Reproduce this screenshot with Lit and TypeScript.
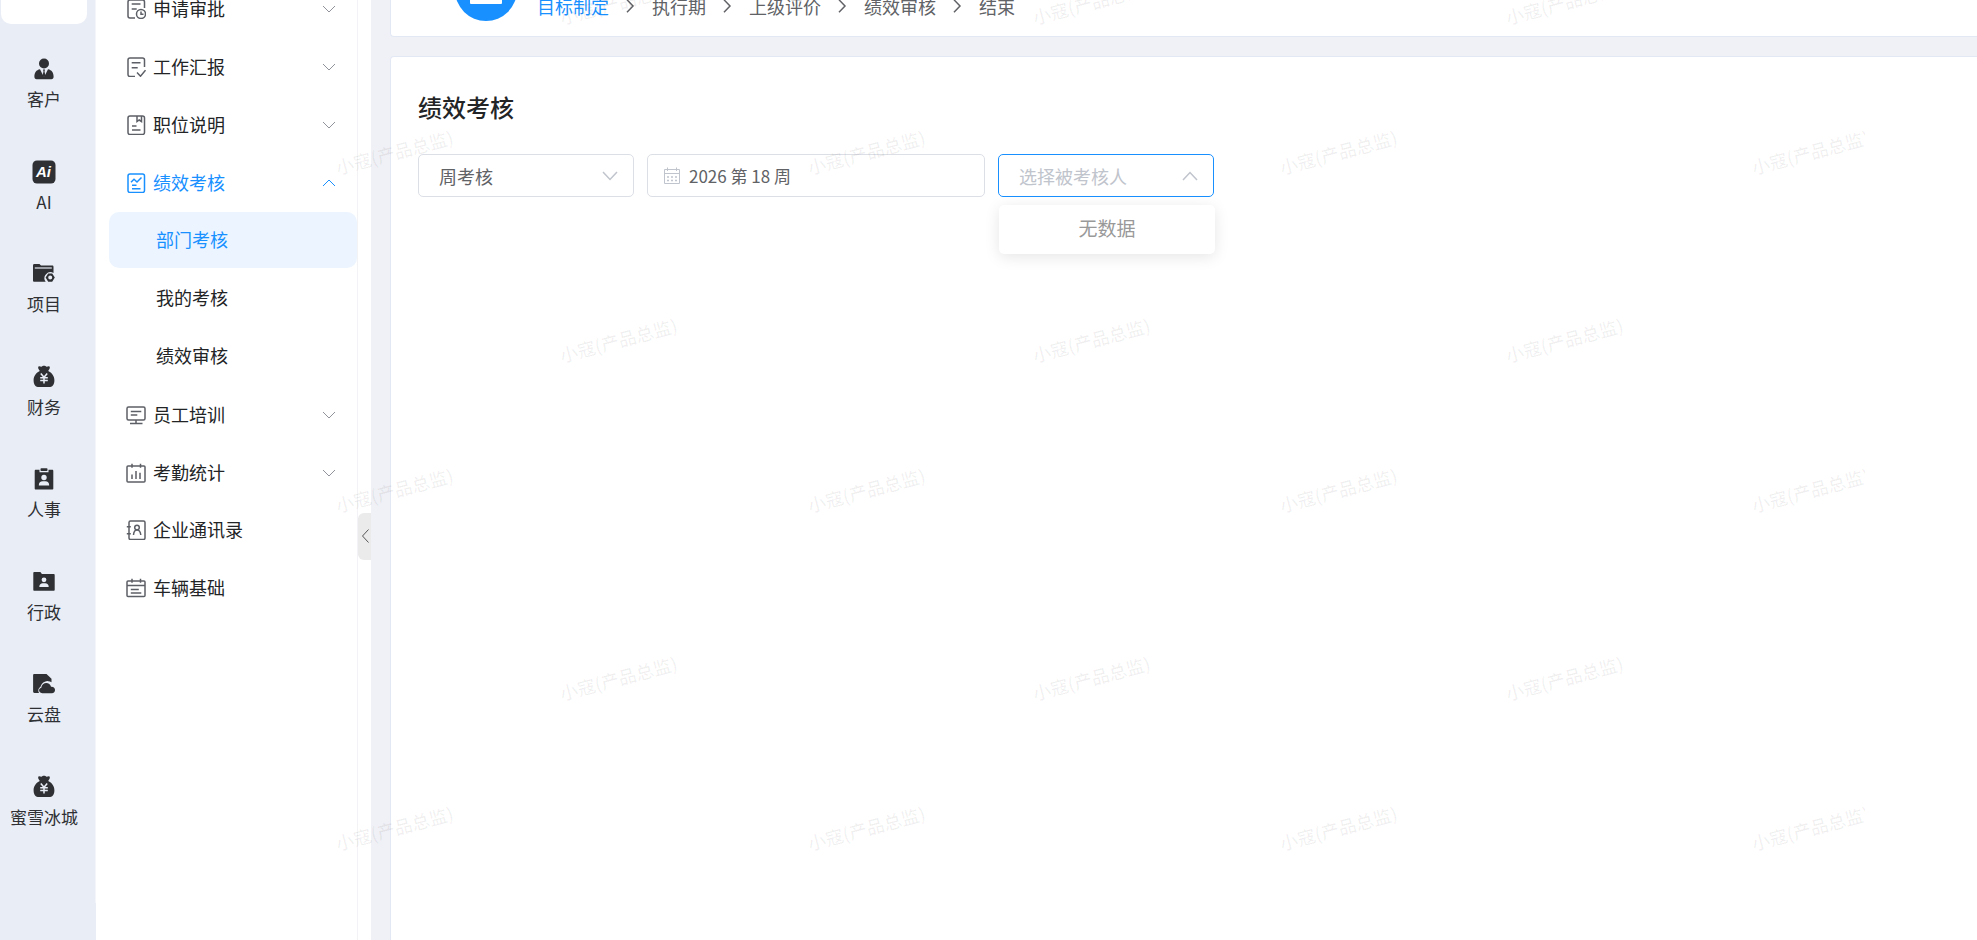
import { LitElement, html, svg, css, SVGTemplateResult } from "lit";
import { customElement, property, state } from "lit/decorators.js";
import { classMap } from "lit/directives/class-map.js";

const YEN_BAG = svg`
  <path fill="currentColor" d="M6.5 1.6c1-.9 1.900.3 2.800.2C10 1.200 11 .7 12 .7s2 .5 2.700 1.100c.9.1 1.800-1.100 2.800-.2 1 1-.3 3.200-1.300 4.400 3.600 1.800 6.200 5 6.200 9.200 0 4.800-2.200 6.800-5.400 6.800H7c-3.200 0-5.400-2-5.400-6.800 0-4.200 2.600-7.400 6.200-9.200C6.800 4.800 5.500 2.600 6.500 1.600z"/>
  <path fill="none" stroke="#e9edf6" stroke-width="1.500" d="M8.800 8.500l3.200 3.800 3.200-3.800M8.200 12.800h7.600M8.200 15.600h7.600M12 12v6.500"/>`;

const railIcons: Record<string, SVGTemplateResult> = {
  customer: svg`
    <circle cx="12" cy="6.500" r="5" fill="currentColor"/>
    <path fill="currentColor" d="M8 12.200l4 8 4-8c3.800.7 5.600 3.300 5.600 7.600 0 1.700-.8 2.400-2.200 2.400H4.600c-1.400 0-2.200-.7-2.200-2.400 0-4.300 1.800-6.900 5.600-7.600z"/>
    <path fill="currentColor" d="M11 12.500h2l-.5 2 .9 4-1.400 2.500-1.400-2.500.9-4z"/>`,
  ai: svg`
    <rect x=".5" y=".5" width="23" height="23" rx="4.500" fill="currentColor"/>
    <text class="glyph" x="11.500" y="17" text-anchor="middle">Ai</text>`,
  project: svg`
    <path fill="currentColor" d="M1 3.500c0-.9.500-1.500 1.300-1.500h5.200l1.500 1.600h11.200c.8 0 1.300.5 1.300 1.300V11a6 6 0 0 0-7.800 8.800H2.300c-.8 0-1.300-.5-1.300-1.300z"/>
    <path stroke="#a9acb3" stroke-width="1.800" d="M2.800 6h17"/>
    <path fill="currentColor" fill-rule="evenodd" d="M16.200 11.500h4l2.600 4-2.600 4.300h-4l-2.600-4.300zM18.200 13.600a2 2 0 1 0 0 4 2 2 0 0 0 0-4z"/>`,
  bag: YEN_BAG,
  staff: svg`
    <path fill="currentColor" d="M3.800 2.800h3.700v2.400h9V2.800h3.700c.7 0 1.100.4 1.100 1.100v17.500c0 .7-.4 1.100-1.100 1.100H3.800c-.7 0-1.100-.4-1.100-1.100V3.900c0-.7.400-1.100 1.100-1.100z"/>
    <rect x="8.500" y="1.300" width="7" height="2.700" rx=".8" fill="currentColor"/>
    <circle cx="12" cy="10.500" r="2.700" fill="#e9edf6"/>
    <path fill="#e9edf6" d="M6.800 18.500c0-3 1.600-4.300 3.800-4.300h2.800c2.200 0 3.800 1.300 3.800 4.300z"/>`,
  admin: svg`
    <path fill="currentColor" d="M1.300 3.200c0-.7.400-1.100 1.100-1.100h6l1.500 2h11.700c.7 0 1.100.4 1.100 1.100v14.500c0 .7-.4 1.100-1.100 1.100H2.400c-.7 0-1.100-.4-1.100-1.100z"/>
    <circle cx="12" cy="9.800" r="2.400" fill="#e9edf6"/>
    <path fill="#e9edf6" d="M7.300 17c0-2.700 1.500-3.800 3.400-3.800h2.600c1.900 0 3.400 1.100 3.400 3.800z"/>`,
  drive: svg`
    <path fill="currentColor" d="M2.500 2h12l5 4.800v3.500a7.200 7.200 0 0 0-11 4.500c-2.300 1.200-2.800 4-1.500 6.200H2.500c-.9 0-1.400-.5-1.400-1.400V3.400C1.100 2.500 1.600 2 2.500 2z"/>
    <path fill="currentColor" d="M10.300 21.200c-3.800 0-4.400-4.600-1-5.500.4-6.200 8.900-6.300 9.700-1 5.200-.4 5.200 6.500.8 6.500z"/>`,
};

const navIcons: Record<string, SVGTemplateResult> = {
  apply: svg`<path d="M9 19H4a2 2 0 0 1-2-2V3a2 2 0 0 1 2-2h12.500a2 2 0 0 1 2 2v6M5.700 5h8.800M5.700 10h5"/><circle cx="15" cy="15" r="4.500"/><path d="M15 12.500V15.300h2.500"/>`,
  report: svg`<path d="M9 19.500H4a2 2 0 0 1-2-2V3a2 2 0 0 1 2-2h12.500a2 2 0 0 1 2 2v7M5.700 5.700h8.800M5.700 10.700h6M11 15.500l3.500 3.700 5-6"/>`,
  post: svg`<rect x="2" y="1" width="16.500" height="18.500" rx="2"/><path d="M11 1v5.500l2.200-1.500 2.300 1.500V1M6 11h4.500M6 15h8.500"/>`,
  review: svg`<rect x="2" y="1" width="16.500" height="18.500" rx="2"/><path d="M5 9.200l3-3 3 2.800 4.500-4.500M6 12.300h4.500M6 15.800h8.500"/>`,
  training: svg`<rect x="1" y="2" width="18" height="13" rx="1.500"/><path d="M4.800 6.500h10.500M4.800 10h6.500M10 15v3M4 18.500h12.500"/>`,
  stats: svg`<rect x="1" y="3" width="18" height="16" rx="1"/><path d="M6 .8v4M14.500.8v4M6 11.500v4.500M10 8v8M14 9.800v6.200"/>`,
  contacts: svg`<rect x="3" y="1" width="16" height="18.500" rx="1.500"/><path d="M.8 6.800h4M.8 13.800h4"/><circle cx="11" cy="7.500" r="2.300"/><path d="M7.500 15c.2-3 1.500-5 3.500-5 2 0 3.500 2 3.800 5"/>`,
  vehicle: svg`<rect x="1" y="3" width="18" height="15.500" rx="1"/><path d="M1 7.500h18M6 .8v4M14.500.8v4M4.800 11.500h8M4.800 15h10.500"/>`,
};

interface RailItem { label: string; icon: string }
interface NavItem {
  label: string;
  icon: string;
  expandable?: boolean;
  children?: string[];
}

const RAIL: RailItem[] = [
  { label: "客户", icon: "customer" },
  { label: "AI", icon: "ai" },
  { label: "项目", icon: "project" },
  { label: "财务", icon: "bag" },
  { label: "人事", icon: "staff" },
  { label: "行政", icon: "admin" },
  { label: "云盘", icon: "drive" },
  { label: "蜜雪冰城", icon: "bag" },
];

const NAV: NavItem[] = [
  { label: "申请审批", icon: "apply", expandable: true },
  { label: "工作汇报", icon: "report", expandable: true },
  { label: "职位说明", icon: "post", expandable: true },
  { label: "绩效考核", icon: "review", expandable: true, children: ["部门考核", "我的考核", "绩效审核"] },
  { label: "员工培训", icon: "training", expandable: true },
  { label: "考勤统计", icon: "stats", expandable: true },
  { label: "企业通讯录", icon: "contacts" },
  { label: "车辆基础", icon: "vehicle" },
];

const STEPS = ["目标制定", "执行期", "上级评价", "绩效审核", "结束"];

const reset = css`
  * { box-sizing: border-box; }
  ul, ol { list-style: none; margin: 0; padding: 0; }
  a { color: inherit; text-decoration: none; }
  button { border: 0; padding: 0; background: none; font: inherit; color: inherit; cursor: pointer; }
  svg { display: block; flex: none; }
`;

@customElement("app-rail")
export class AppRail extends LitElement {
  static styles = [reset, css`
    :host { display: block; width: 96px; flex: none; background: #e9edf6; overflow: hidden; }
    .inner { height: calc(100% - 37px); border-right: 1px solid #f3f5fa; padding: 0 8px 0 1px; }
    .current { display: block; height: 24px; background: #fff; border-radius: 0 0 10px 10px; }
    .list { display: grid; grid-template-rows: repeat(8, 1fr); height: 820px; margin-top: 9px; }
    .item { display: flex; flex-direction: column; align-items: center; justify-content: center; gap: 6px; height: 100%; color: #2e3033; font-size: 17px; line-height: 24px; white-space: nowrap; }
    .glyph { fill: #fff; font: italic 700 15px "Liberation Sans", sans-serif; }
  `];

  render() {
    return html`
      <nav class="inner" aria-label="应用">
        <span class="current"></span>
        <ul class="list">
          ${RAIL.map((r) => html`<li>
            <a class="item" href="#">
              <svg width="24" height="24" viewBox="0 0 24 24" aria-hidden="true">${railIcons[r.icon]}</svg>
              <span>${r.label}</span>
            </a>
          </li>`)}
        </ul>
      </nav>`;
  }
}

@customElement("app-sidebar")
export class AppSidebar extends LitElement {
  @state() private open = "绩效考核";
  @property() current = "部门考核";

  static styles = [reset, css`
    :host { display: flex; width: 275px; flex: none; background: #fff; overflow: hidden; }
    .menu { flex: 1; border-right: 1px solid #f3f3f5; padding-left: 13px; }
    .tree { margin-top: -20px; }
    .row { display: flex; align-items: center; gap: 7px; width: 100%; height: 56px; margin-bottom: 2px; padding: 0 21px 0 17px; color: #222426; font-size: 18px; line-height: 26px; text-align: left; }
    .head { height: 58px; margin-bottom: 0; }
    .label { padding-bottom: 2px; }
    .row svg { fill: none; stroke: #5c5f66; stroke-width: 1.5; }
    .row .chev { margin-left: auto; stroke: #909399; stroke-width: 1; }
    .open, .on { color: #1890ff; }
    .open svg, .open .chev { stroke: #1890ff; }
    .sub { padding-left: 47px; border-radius: 10px; }
    .on { background: #ecf5ff; }
    .edge { display: flex; align-items: center; width: 13px; padding-top: 132px; }
    .fold { display: flex; align-items: center; justify-content: center; width: 13px; height: 47px; background: #ebebeb; border-radius: 6px 0 0 6px; }
    .fold svg { fill: none; stroke: #555; stroke-width: 1; }
  `];

  private chevron(up: boolean) {
    return html`<svg class="chev" width="14" height="8" viewBox="0 0 14 8" aria-hidden="true">
      ${up ? svg`<path d="M1 7l6-6 6 6"/>` : svg`<path d="M1 1l6 6 6-6"/>`}</svg>`;
  }

  private icon(name: string) {
    return html`<svg width="20" height="20" viewBox="0 0 20 20" aria-hidden="true">${navIcons[name]}</svg>`;
  }

  render() {
    return html`
      <nav class="menu" aria-label="菜单">
        <ul class="tree">
          ${NAV.map((n) => {
            const open = this.open === n.label;
            return html`<li>
              ${n.expandable
                ? html`<button class=${classMap({ row: true, head: true, open })} aria-expanded=${open}
                    @click=${() => { this.open = open ? "" : n.label; }}>
                    ${this.icon(n.icon)}<span class="label">${n.label}</span>${this.chevron(open)}
                  </button>`
                : html`<a class="row" href="#">${this.icon(n.icon)}<span class="label">${n.label}</span></a>`}
              ${open && n.children
                ? html`<ul>${n.children.map((c) => html`<li>
                    <a class=${classMap({ row: true, sub: true, on: c === this.current })} href="#"><span class="label">${c}</span></a>
                  </li>`)}</ul>`
                : null}
            </li>`;
          })}
        </ul>
      </nav>
      <div class="edge">
        <button class="fold" aria-label="收起菜单">
          <svg width="8" height="14" viewBox="0 0 8 14" aria-hidden="true"><path d="M7.500.5L1.500 7l6 6.500"/></svg>
        </button>
      </div>`;
  }
}

@customElement("app-watermark")
export class AppWatermark extends LitElement {
  static styles = css`
    :host { position: absolute; inset: 0 112px 0 0; overflow: hidden; pointer-events: none; z-index: 5; }
    svg { display: block; width: 100%; height: 100%; }
    text { fill: #000; fill-opacity: 0.06; font: 500 18px "Noto Sans CJK SC", sans-serif; }
  `;

  render() {
    const marks: [number, number][] = [];
    for (let row = 0; row < 3; row++) {
      for (let col = 0; col < 3; col++) marks.push([562 + col * 473, 25 + row * 338]);
      for (let col = 0; col < 4; col++) marks.push([338 + col * 472, 175 + row * 338]);
    }
    return html`<svg aria-hidden="true">
      ${marks.map(([x, y]) => svg`<text transform="translate(${x} ${y}) rotate(-15)">小寇(产品总监)</text>`)}
    </svg>`;
  }
}

@customElement("app-root")
export class AppRoot extends LitElement {
  static styles = [reset, css`
    :host { display: flex; position: relative; height: 100vh; overflow: hidden; background: #f0f1f6; font-family: "Noto Sans CJK SC", sans-serif; color: #303133; }
    .main { flex: 1; min-width: 0; display: flex; flex-direction: column; gap: 19px; padding-left: 19px; }
    .card { background: #fff; border: 1px solid #e3e8f5; border-right: 0; border-radius: 4px 0 0 4px; }
    .flow { display: flex; align-items: flex-end; gap: 20px; height: 37px; padding: 0 64px 15px; border-top: 0; border-radius: 0 0 0 4px; }
    .steps { display: flex; align-items: center; gap: 12px; padding-bottom: 2px; font-size: 18px; line-height: 26px; color: #606266; }
    .step { display: flex; align-items: center; gap: 12px; }
    .active { color: #1890ff; }
    .step svg { fill: none; stroke: #606266; stroke-width: 1.5; }
    .body { flex: 1; padding: 32px 27px; border-bottom: 0; border-bottom-left-radius: 0; }
    .title { margin: 0; font-size: 24px; line-height: 36px; font-weight: 500; color: #222426; }
    .filters { display: flex; gap: 13px; margin-top: 29px; }
    .field { position: relative; display: flex; align-items: center; width: 216px; height: 43px; padding: 0 15px 0 20px; border: 1px solid #dcdfe6; border-radius: 5px; background: #fff; }
    .field svg { fill: none; stroke: #c0c4cc; stroke-width: 1.5; pointer-events: none; }
    .date { width: 338px; gap: 8px; padding-left: 15px; }
    .focus { border-color: #1890ff; }
    .control { flex: 1; min-width: 0; height: 26px; margin: 0; padding: 0; border: 0; outline: 0; background: none; appearance: none; font: inherit; font-size: 18px; line-height: 26px; color: #606266; }
    .date .control { font-size: 17px; }
    .control::placeholder { color: #c0c4cc; opacity: 1; }
    .menu { position: absolute; top: 50px; left: 0; width: 216px; height: 49px; border-radius: 5px; background: #fff; box-shadow: 0 3px 15px rgba(0, 0, 0, 0.1); text-align: center; font-size: 19px; line-height: 46px; color: #999; }
    .sr { position: absolute; width: 1px; height: 1px; overflow: hidden; clip-path: inset(50%); }
  `];

  render() {
    return html`
      <app-rail></app-rail>
      <app-sidebar></app-sidebar>
      <main class="main">
        <section class="card flow">
          <svg width="62" height="62" viewBox="0 0 62 62" aria-hidden="true">
            <circle cx="31" cy="31" r="31" fill="#1890ff"/>
            <rect x="15" y="15" width="32" height="30" rx="1" fill="#fff"/>
          </svg>
          <ol class="steps">
            ${STEPS.map((s, i) => html`<li class="step">
              <span class=${classMap({ active: i === 0 })}>${s}</span>
              ${i < STEPS.length - 1
                ? html`<svg width="19" height="14" viewBox="0 0 19 14" aria-hidden="true"><path d="M6 .8l6 6.200-6 6.200"/></svg>`
                : null}
            </li>`)}
          </ol>
        </section>
        <section class="card body">
          <h1 class="title">绩效考核</h1>
          <form class="filters">
            <div class="field">
              <label class="sr" for="cycle">考核周期</label>
              <select class="control" id="cycle"><option>周考核</option></select>
              <svg width="16" height="10" viewBox="0 0 16 10" aria-hidden="true"><path d="M1 1l7 7.500L15 1"/></svg>
            </div>
            <div class="field date">
              <label class="sr" for="week">周</label>
              <svg width="18" height="18" viewBox="0 0 18 18" aria-hidden="true">
                <path stroke-width="1" d="M1.500 2.500h15v14h-15zM1.500 6.500h15M4.500.5v3.500M13.500.5v3.500"/>
                <path stroke-dasharray="2 2" d="M4 10h10M4 13.500h10"/>
              </svg>
              <input class="control" id="week" type="text" .value=${"2026 第 18 周"} />
            </div>
            <div class="field focus">
              <label class="sr" for="person">被考核人</label>
              <input class="control" id="person" type="text" role="combobox" aria-expanded="true" aria-controls="person-menu" readonly placeholder="选择被考核人" />
              <svg width="16" height="10" viewBox="0 0 16 10" aria-hidden="true"><path d="M1 9l7-7.500L15 9"/></svg>
              <div class="menu" id="person-menu" role="listbox">无数据</div>
            </div>
          </form>
        </section>
      </main>
      <app-watermark></app-watermark>`;
  }
}
